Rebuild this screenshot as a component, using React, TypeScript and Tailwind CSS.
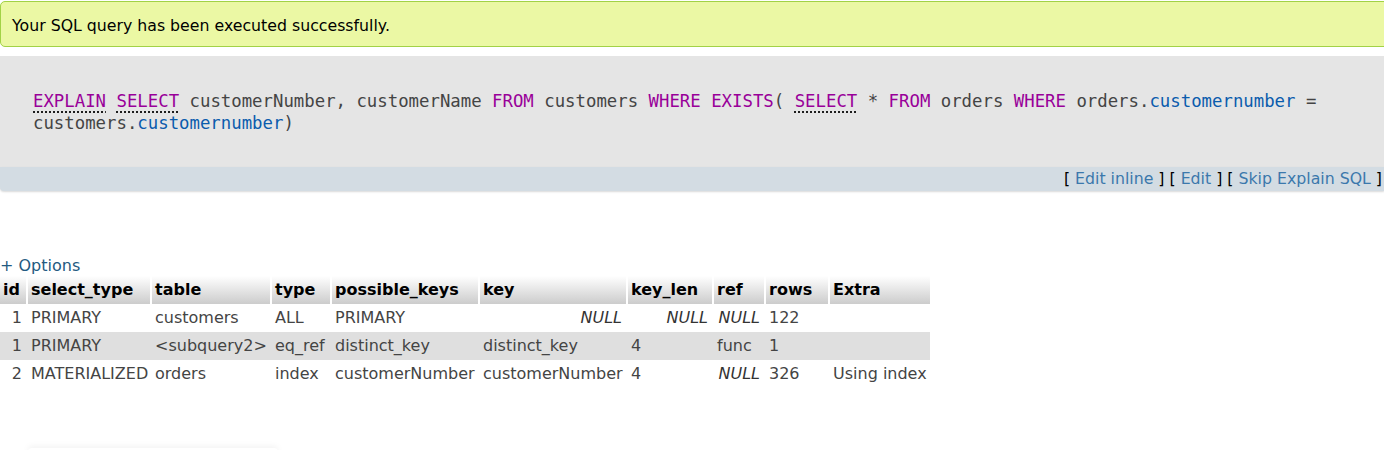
const sans = { fontFamily: '"DejaVu Sans", sans-serif' };

const Kw = ({ children, doc }: { children: string; doc?: boolean }) => (
  <span
    className={
      doc
        ? 'text-[#990099] underline decoration-dotted decoration-black underline-offset-[5px]'
        : 'text-[#990099]'
    }
  >
    {children}
  </span>
);

const Col = ({ children }: { children: string }) => (
  <span className="text-[#0b5cad]">{children}</span>
);

type Cell = string | null;

const headers = [
  'id',
  'select_type',
  'table',
  'type',
  'possible_keys',
  'key',
  'key_len',
  'ref',
  'rows',
  'Extra',
];

const widths = [
  'w-[28px]',
  'w-[124px]',
  'w-[120px]',
  'w-[60px]',
  'w-[148px]',
  'w-[148px]',
  'w-[86px]',
  'w-[52px]',
  'w-[64px]',
  'w-[100px]',
];

const rows: Cell[][] = [
  ['1', 'PRIMARY', 'customers', 'ALL', 'PRIMARY', null, null, null, '122', ''],
  ['1', 'PRIMARY', '<subquery2>', 'eq_ref', 'distinct_key', 'distinct_key', '4', 'func', '1', ''],
  ['2', 'MATERIALIZED', 'orders', 'index', 'customerNumber', 'customerNumber', '4', null, '326', 'Using index'],
];

export default function App() {
  return (
    <div className="h-[450px] w-[1384px] overflow-hidden bg-white text-[16px] text-[#444]" style={sans}>
      {/* success message */}
      <div className="mt-px w-[1400px] rounded-[5px] border border-[#a2d246] bg-[#ebf8a4] px-[11px] pt-[14px] pb-[10px] text-[15.75px] leading-[20px] text-black">
        Your SQL query has been executed successfully.
      </div>

      {/* sql box */}
      <div className="mt-[9px] w-[1384px]">
        <div className="bg-[#e5e5e5] px-[33px] pt-[34px] pb-[33px]">
          <div
            className="text-[17.33px] leading-[22px] text-[#444]"
            style={{ fontFamily: '"DejaVu Sans Mono", monospace' }}
          >
            <Kw doc>EXPLAIN</Kw> <Kw doc>SELECT</Kw> customerNumber, customerName <Kw>FROM</Kw> customers{' '}
            <Kw>WHERE</Kw> <Kw>EXISTS</Kw>( <Kw doc>SELECT</Kw> * <Kw>FROM</Kw> orders <Kw>WHERE</Kw> orders.
            <Col>customernumber</Col> = customers.<Col>customernumber</Col>)
          </div>
        </div>
        <div className="flex h-[24px] items-center justify-end rounded-bl-[4px] bg-[#d3dce3] pr-[2px] text-[15.75px] leading-[24px] text-black shadow-[0_1px_2px_rgba(0,0,0,0.15)]">
          <span>[&nbsp;</span>
          <a className="text-[#3b78ac]">Edit inline</a>
          <span>&nbsp;] [&nbsp;</span>
          <a className="text-[#3b78ac]">Edit</a>
          <span>&nbsp;] [&nbsp;</span>
          <a className="text-[#3b78ac]">Skip Explain SQL</a>
          <span>&nbsp;]</span>
        </div>
      </div>

      {/* result */}
      <div className="mt-[65px]">
        <a className="block h-[20px] leading-[20px] text-[#235a81]">+ Options</a>
        <table className="w-[930px] table-fixed border-separate border-spacing-0">
          <thead>
            <tr>
              {headers.map((h, i) => (
                <th
                  key={h}
                  className={`${widths[i]} h-[28px] bg-gradient-to-b from-white to-[#cccccc] px-[3px] text-left font-bold whitespace-nowrap text-black ${i < 9 ? 'border-r-2 border-white' : ''}`}
                >
                  {h}
                </th>
              ))}
            </tr>
          </thead>
          <tbody>
            {rows.map((r, ri) => (
              <tr key={ri} className={ri === 1 ? 'bg-[#dfdfdf]' : 'bg-white'}>
                {r.map((c, ci) =>
                  c === null ? (
                    <td key={ci} className="h-[28px] pl-[3px] pr-[6px] text-right whitespace-nowrap italic text-[#333]">
                      NULL
                    </td>
                  ) : (
                    <td
                      key={ci}
                      className={`h-[28px] px-[3px] whitespace-nowrap ${ci === 0 ? 'text-right pr-[6px]' : 'text-left'}`}
                    >
                      {c}
                    </td>
                  ),
                )}
              </tr>
            ))}
          </tbody>
        </table>
      </div>

      <div className="mt-[60px] ml-[28px] h-[8px] w-[250px] rounded-t-[4px] shadow-[0_-2px_6px_rgba(0,0,0,0.05)]" />
    </div>
  );
}
